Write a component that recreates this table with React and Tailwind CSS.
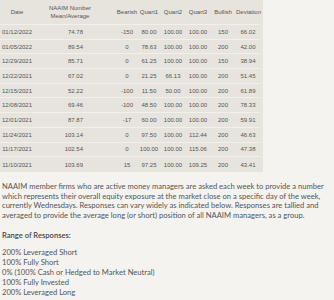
import React from "react";

const rows = [
  ["01/12/2022", "74.78", "-150", "80.00", "100.00", "100.00", "150", "66.02"],
  ["01/05/2022", "89.54", "0", "78.63", "100.00", "100.00", "200", "42.00"],
  ["12/29/2021", "85.71", "0", "61.25", "100.00", "100.00", "150", "38.94"],
  ["12/22/2021", "67.02", "0", "21.25", "66.13", "100.00", "200", "51.45"],
  ["12/15/2021", "52.22", "-100", "11.50", "50.00", "100.00", "200", "61.89"],
  ["12/08/2021", "69.46", "-100", "48.50", "100.00", "100.00", "200", "78.33"],
  ["12/01/2021", "87.87", "-17", "60.00", "100.00", "100.00", "200", "59.91"],
  ["11/24/2021", "103.14", "0", "97.50", "100.00", "112.44", "200", "46.63"],
  ["11/17/2021", "102.54", "0", "100.00", "100.00", "115.06", "200", "47.38"],
  ["11/10/2021", "103.69", "15", "97.25", "100.00", "109.25", "200", "43.41"],
];

const responses = [
  "200% Leveraged Short",
  "100% Fully Short",
  "0% (100% Cash or Hedged to Market Neutral)",
  "100% Fully Invested",
  "200% Leveraged Long",
];

// column widths so the centres land where the screenshot has them
const cols = "grid grid-cols-[34px_82px_22px_22px_26px_24px_26px_24px]";

const SentimentTable = () => {
  return (
    <div className="w-[263px] bg-[#e7e4dd] pr-[3px] text-[6px] leading-none text-[#555]">
      <div className={`${cols} h-[25px] items-center border-b border-[#f2f0eb] text-center whitespace-nowrap`}>
        <div>Date</div>
        <div className="pr-[10px] leading-[8px]">
          NAAIM Number
          <br />
          Mean/Average
        </div>
        <div>Bearish</div>
        <div>Quart1</div>
        <div>Quart2</div>
        <div>Quart3</div>
        <div>Bullish</div>
        <div>Deviation</div>
      </div>
      {rows.map((row) => (
        <div
          key={row[0]}
          className={`${cols} h-[14.7px] items-center border-b border-[#f2f0eb] text-center whitespace-nowrap last:border-b-0`}
        >
          <div>{row[0]}</div>
          <div className="text-right pr-[33px]">{row[1]}</div>
          <div>{row[2]}</div>
          <div>{row[3]}</div>
          <div>{row[4]}</div>
          <div>{row[5]}</div>
          <div>{row[6]}</div>
          <div>{row[7]}</div>
        </div>
      ))}
    </div>
  );
};

export default function App() {
  return (
    <div className="w-[334px] h-[300px] overflow-hidden bg-[#f4f3f0] font-['Liberation_Sans',Arial,sans-serif]">
      <SentimentTable />
      <div className="mt-[10px] pl-[2px] font-['Lato','Open_Sans',sans-serif] text-[7.6px] leading-[9.7px] text-[#555] whitespace-nowrap">
        <p>
          NAAIM member firms who are active money managers are asked each week to provide a number
          <br />
          which represents their overall equity exposure at the market close on a specific day of the week,
          <br />
          currently Wednesdays. Responses can vary widely as indicated below. Responses are tallied and
          <br />
          averaged to provide the average long (or short) position of all NAAIM managers, as a group.
        </p>
        <p className="mt-[10px] font-semibold text-[#444]">Range of Responses:</p>
        <ul className="mt-[7px] leading-[10px]">
          {responses.map((r) => (
            <li key={r}>{r}</li>
          ))}
        </ul>
      </div>
    </div>
  );
}
